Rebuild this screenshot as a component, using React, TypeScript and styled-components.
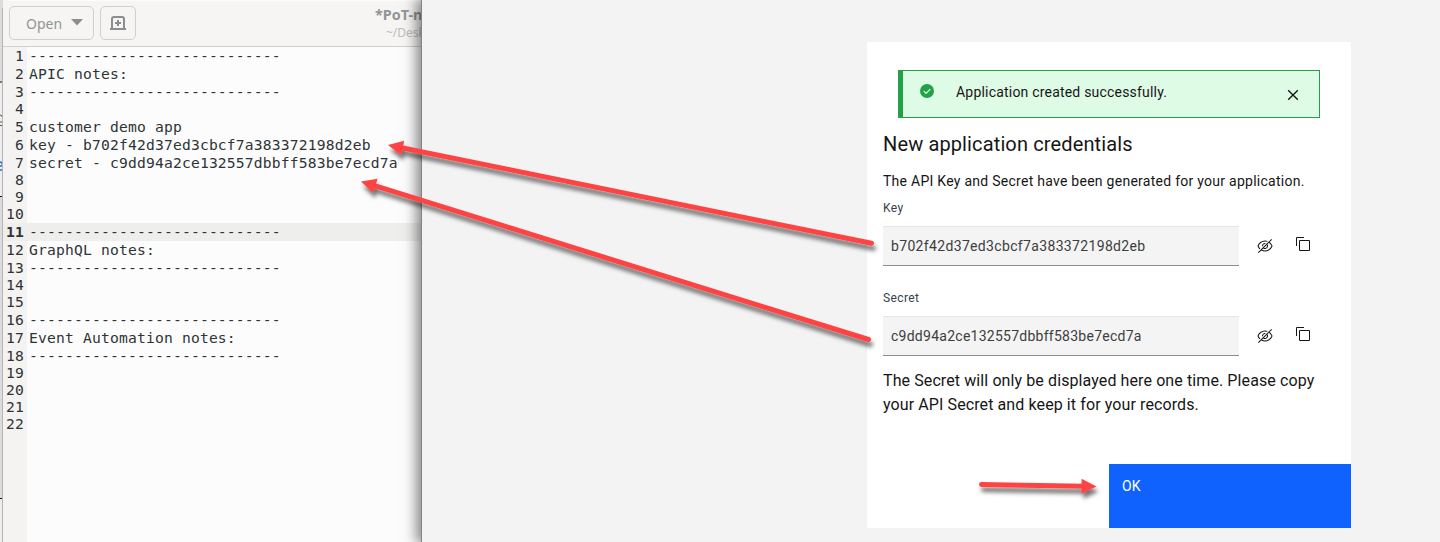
import React from "react";
import styled, { createGlobalStyle } from "styled-components";

const GlobalStyle = createGlobalStyle`
  body { margin: 0; background: #f3f3f3; overflow: hidden; }
  * { box-sizing: border-box; }
`;

const Screen = styled.div`
  position: relative;
  display: flex;
  width: 1440px;
  height: 542px;
  overflow: hidden;
`;

/* Sliver of the window that sits behind the editor */
const Behind = styled.div`
  width: 3px;
  height: 542px;
  flex: none;
  background: #dcdcdc;
`;

const EditorWindow = styled.section`
  display: flex;
  flex-direction: column;
  width: 418px;
  flex: none;
  overflow: hidden;
  background: #fcfcfc;
  border-top-left-radius: 6px;
`;

const HeaderBar = styled.header`
  display: flex;
  align-items: flex-start;
  flex: none;
  height: 47px;
  padding: 6px 0 0 6px;
  gap: 6px;
  background: #f6f5f4;
  border-top: 1px solid #fbfbfa;
  border-bottom: 1px solid #d3cfca;
  font-family: "Noto Sans", sans-serif;
  color: #929595;
`;

const HeaderButton = styled.button<{ $width: number; $indent?: number }>`
  display: flex;
  flex: none;
  align-items: center;
  justify-content: center;
  width: ${(p) => p.$width}px;
  height: 34px;
  margin-top: -1px;
  padding: 0 0 0 ${(p) => p.$indent ?? 0}px;
  gap: 9px;
  border: 1px solid #d3cec9;
  border-radius: 5px;
  background: #f6f5f4;
  color: #929595;
  font: 14px "Noto Sans", sans-serif;
`;

const DocTitle = styled.div`
  margin-left: 233px;
  white-space: nowrap;
`;

const DocName = styled.div`
  font-size: 14.4px;
  font-weight: 700;
  line-height: 18px;
  margin-top: -1px;
`;

const DocPath = styled.div`
  padding-left: 11px;
  font-size: 12px;
  line-height: 18px;
  color: #bcbdbc;
`;

const Lines = styled.div`
  flex: 1;
  background: linear-gradient(90deg, #f4f3f2 24px, #fcfcfc 24px);
  font: 14.667px "DejaVu Sans Mono", monospace;
  letter-spacing: 0.17px;
  color: #2e3436;
`;

const Line = styled.div<{ $filled: boolean; $current: boolean }>`
  display: flex;
  height: ${(p) => (p.$filled ? 18 : 17)}px;
  line-height: ${(p) => (p.$filled ? 18 : 16)}px;
  white-space: pre;
  background: ${(p) => (p.$current ? "#eeeeec" : "transparent")};
`;

const LineNumber = styled.span<{ $current: boolean }>`
  width: 21px;
  margin-right: 5px;
  flex: none;
  display: flex;
  justify-content: flex-end;
  font-weight: ${(p) => (p.$current ? 700 : 400)};
`;

const Browser = styled.main`
  position: relative;
  flex: 1;
  padding: 42px 0 0 445px;
  background: #f3f3f3;
  border-left: 1px solid #858585;
  box-shadow: -2px 0 13px 2px rgba(0, 0, 0, 0.5);
`;

const Card = styled.div`
  display: flex;
  flex-direction: column;
  width: 484px;
  height: 486px;
  padding: 28px 0 0 16px;
  background: #fff;
  font-family: Roboto, sans-serif;
  color: #161616;
`;

const Notice = styled.div`
  display: flex;
  flex: none;
  width: 422px;
  height: 48px;
  margin-left: 15px;
  padding: 0 20px 0 17px;
  border: 1px solid #24a148;
  border-left-width: 5px;
  background: #defbe6;
`;

const NoticeText = styled.span`
  flex: 1;
  margin: 12px 0 0 22px;
  font-size: 14px;
  line-height: 18px;
  letter-spacing: 0.2px;
`;

const Title = styled.h2`
  margin: 12px 0 0;
  font-size: 20px;
  font-weight: 400;
  line-height: 28px;
  letter-spacing: 0.13px;
`;

const Intro = styled.p`
  margin: 14px 0 0;
  font-size: 14px;
  line-height: 18px;
  letter-spacing: 0.265px;
`;

const Label = styled.label`
  margin-top: 10px;
  font-size: 12px;
  line-height: 16px;
  letter-spacing: 0.4px;
  color: #33424e;
`;

const FieldRow = styled.div<{ $last?: boolean }>`
  display: flex;
  height: 40px;
  flex: none;
  margin: 10px 0 ${(p) => (p.$last ? 0 : 14)}px;
`;

const Value = styled.div<{ $spacing: number }>`
  width: 356px;
  padding-left: 8px;
  background: #f4f4f4;
  border-top: 1px solid #e6e6e6;
  border-bottom: 1px solid #8d8d8d;
  font-size: 14px;
  line-height: 38px;
  letter-spacing: ${(p) => p.$spacing}px;
  color: #3d3d3d;
`;

const Warning = styled.p`
  margin: 13px 0 0;
  font-size: 16px;
  line-height: 24px;
  letter-spacing: 0.1px;
  white-space: pre-line;
`;

const OkButton = styled.button`
  width: 242px;
  height: 64px;
  margin: auto 0 0 auto;
  padding: 13px 13px 0;
  display: flex;
  align-items: flex-start;
  border: 0;
  background: #0f62fe;
  color: #fff;
  font: 14px/18px Roboto, sans-serif;
`;

const Icon = styled.svg<{ $top: number; $left?: number }>`
  flex: none;
  margin: ${(p) => p.$top}px 0 0 ${(p) => p.$left ?? 0}px;
`;

const Overlay = styled.svg`
  position: absolute;
  inset: 0;
  pointer-events: none;
`;

const RULE = "-".repeat(28);
const NOTES = [
  RULE, "APIC notes:", RULE, "", "customer demo app",
  "key - b702f42d37ed3cbcf7a383372198d2eb",
  "secret - c9dd94a2ce132557dbbff583be7ecd7a",
  "", "", "", RULE, "GraphQL notes:", RULE, "", "",
  RULE, "Event Automation notes:", RULE, "", "", "", "",
];
const CURRENT_LINE = 11;

function BehindEdge() {
  return (
    <Behind>
      <svg width="3" height="542">
        <rect y="83" width="3" height="113" fill="#ededed" />
        <rect y="499" width="3" height="43" fill="#ededed" />
        <path d="M0 82h3M0 196.500h3M0 498.500h3" stroke="#111" />
        <path d="M0 115q2 0 2 2M0 122h3M0 125.500h3" stroke="#555" fill="none" />
        <path d="M2 139h1v2h-1zM2 146h1v2h-1z" fill="#333" />
        <path d="M0 162q2.500 0 2.500 4H0M0 170h2" stroke="#2a6fc4" strokeWidth="1.500" fill="none" />
        <path d="M3 531q-2 3 0 6z" fill="#222" />
        <rect x="2" y="8" width="1" height="534" fill="#b5b5b5" />
      </svg>
    </Behind>
  );
}

function FieldIcons() {
  return (
    <>
      <Icon $top={12} $left={18} width="16" height="16" viewBox="0 0 32 32" fill="#161616">
        <path d="M5.240 22.510l1.430-1.420A14.060 14.060 0 0 1 3.070 16C5.100 10.930 10.700 7 16 7a12.380 12.380 0 0 1 4 .72l1.550-1.560A14.720 14.720 0 0 0 16 5 16.690 16.690 0 0 0 1.060 15.660a1 1 0 0 0 0 .68A16 16 0 0 0 5.240 22.510Z" />
        <path d="M12 15.730a4 4 0 0 1 3.700-3.700l1.810-1.820a6 6 0 0 0-7.330 7.330zM30.940 15.660A16.400 16.400 0 0 0 25.200 8.220L30 3.410 28.590 2 2 28.590 3.410 30l5.100-5.100A15.290 15.290 0 0 0 16 27 16.690 16.690 0 0 0 30.940 16.340a1 1 0 0 0 0-.68zM20 16a4 4 0 0 1-6 3.440L19.440 14A4 4 0 0 1 20 16zm-4 9a13.050 13.050 0 0 1-6-1.580l2.540-2.540a6 6 0 0 0 8.350-8.350l2.870-2.870A14.540 14.540 0 0 1 28.930 16C26.900 21.070 21.300 25 16 25z" />
      </Icon>
      <Icon $top={11} $left={23} width="14" height="14" fill="none" stroke="#161616">
        <path d="M3.500 3.500h10v10h-10zM.5 9V.5H8" />
      </Icon>
    </>
  );
}

function Arrow({ from, to }: { from: [number, number]; to: [number, number] }) {
  const dx = to[0] - from[0];
  const dy = to[1] - from[1];
  const length = Math.hypot(dx, dy);
  const angle = (Math.atan2(dy, dx) * 180) / Math.PI;
  return (
    <g filter="url(#shade)">
      <g transform={`translate(${from[0]} ${from[1]}) rotate(${angle})`}>
        <path d={`M0 0H${length - 10}`} stroke="#ff4343" strokeWidth="5" strokeLinecap="round" />
        <path d={`M${length} 0l-15-7.500v15z`} fill="#ff4343" />
      </g>
    </g>
  );
}

export default function App() {
  return (
    <Screen>
      <GlobalStyle />
      <BehindEdge />
      <EditorWindow>
        <HeaderBar>
          <HeaderButton $width={85} $indent={6}>
            Open
            <svg width="12" height="8"><path d="M0 0h12L6 6.500z" fill="#8b8e8f" /></svg>
          </HeaderButton>
          <HeaderButton $width={36}>
            <svg width="16" height="14" fill="none" stroke="#8b8e8f" strokeWidth="2">
              <path d="M2 13V3q0-2 2-2h8q2 0 2 2v10M0 13h16M8 4v6M5 7h6" />
            </svg>
          </HeaderButton>
          <DocTitle>
            <DocName>*PoT-n</DocName>
            <DocPath>~/Desk</DocPath>
          </DocTitle>
        </HeaderBar>
        <Lines>
          {NOTES.map((text, i) => (
            <Line key={i} $filled={text !== ""} $current={i + 1 === CURRENT_LINE}>
              <LineNumber $current={i + 1 === CURRENT_LINE}>{i + 1}</LineNumber>
              {text}
            </Line>
          ))}
        </Lines>
      </EditorWindow>
      <Browser>
        <Card>
          <Notice>
            <Icon $top={13} width="14" height="14" fill="none">
              <circle cx="7" cy="7" r="7" fill="#24a148" />
              <path d="M3.800 7.200l2.200 2.200 4.300-4.300" stroke="#defbe6" strokeWidth="1.200" />
            </Icon>
            <NoticeText>Application created successfully.</NoticeText>
            <Icon $top={18} width="12" height="12" stroke="#161616" strokeWidth="1.400">
              <path d="M1.200 1.200l9.600 9.600M10.800 1.200l-9.600 9.600" />
            </Icon>
          </Notice>
          <Title>New application credentials</Title>
          <Intro>The API Key and Secret have been generated for your application.</Intro>
          <Label>Key</Label>
          <FieldRow>
            <Value $spacing={0.34}>b702f42d37ed3cbcf7a383372198d2eb</Value>
            <FieldIcons />
          </FieldRow>
          <Label>Secret</Label>
          <FieldRow $last>
            <Value $spacing={0.26}>c9dd94a2ce132557dbbff583be7ecd7a</Value>
            <FieldIcons />
          </FieldRow>
          <Warning>
            {"The Secret will only be displayed here one time. Please copy\nyour API Secret and keep it for your records."}
          </Warning>
          <OkButton>OK</OkButton>
        </Card>
      </Browser>
      <Overlay width="1440" height="542">
        <defs>
          <filter id="shade" filterUnits="userSpaceOnUse" x="0" y="0" width="1440" height="542">
            <feDropShadow dx="2" dy="5" stdDeviation="2" floodColor="#000" floodOpacity="0.55" />
          </filter>
        </defs>
        <Arrow from={[871.5, 243.3]} to={[388, 145]} />
        <Arrow from={[868.5, 339.5]} to={[361, 181.5]} />
        <Arrow from={[981.5, 484.500]} to={[1096.500, 486.500]} />
      </Overlay>
    </Screen>
  );
}
